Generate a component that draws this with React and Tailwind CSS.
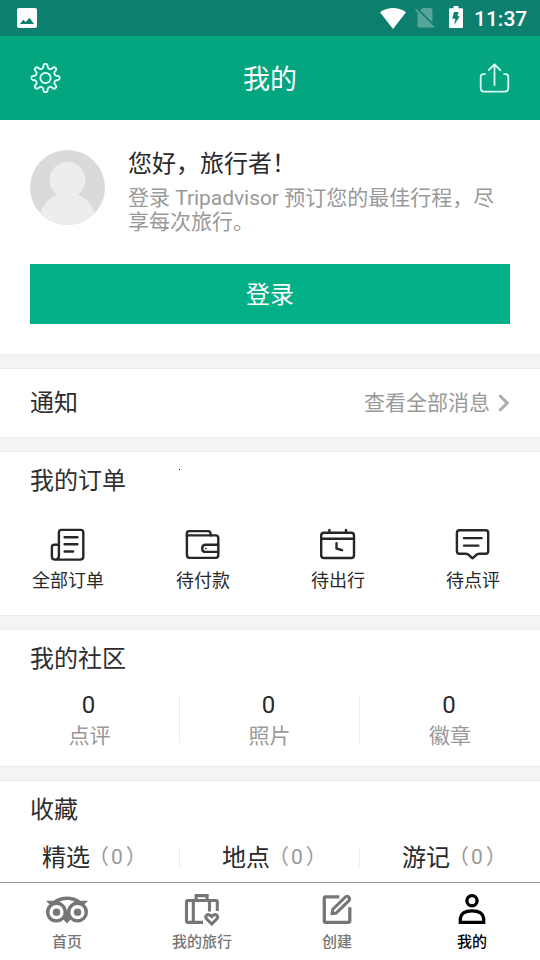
import React from 'react';
import { SiTripadvisor } from 'react-icons/si';

// outline of the eight-toothed settings wheel, centred on 0,0
const gearPath = () => {
    const p = (deg, r) => {
        const a = (deg * Math.PI) / 180;
        return `${(r * Math.cos(a)).toFixed(2)} ${(r * Math.sin(a)).toFixed(2)}`;
    };
    let d = `M${p(-12, 10.8)}`;
    for (let i = 0; i < 8; i++) {
        const c = i * 45;
        d += ` L${p(c - 9.5, 12.6)} Q${p(c - 8, 14.2)} ${p(c, 14.2)} Q${p(c + 8, 14.2)} ${p(c + 9.5, 12.6)} L${p(c + 12, 10.8)}`;
        d += ` Q${p(c + 22.5, 8.9)} ${p(c + 33, 10.8)}`;
    }
    return d + 'Z';
};

const StatusBar = () => (
    <div className="h-9 bg-[#0d7f6e] flex items-center justify-between pl-[17px] pr-3">
        <svg className="w-5 h-5" viewBox="0 0 20 20">
            <rect width="20" height="20" rx="2" fill="#fff" />
            <path d="M3 16 L6.3 11.8 L8.8 14 L12.5 9.8 L17 16Z" fill="#0d7f6e" />
        </svg>
        <div className="flex items-center">
            <svg className="w-[26px] h-[21px]" viewBox="0 0 26 21">
                <path d="M0 4.2 Q13 -4.2 26 4.2 L13 21Z" fill="#fff" />
            </svg>
            <svg className="w-5 h-5 ml-[9px]" viewBox="0 0 20 20">
                <path d="M7.5 0 H15.5 Q17.5 0 17.5 2 V19.5 H4 Q2.5 19.5 2.5 18 V5Z" fill="#57a598" />
                <path d="M1.2 -.2 L20 18.4" stroke="#0d7f6e" strokeWidth="2" />
                <path d="M.6 1.4 L18.8 19.4" stroke="#57a598" strokeWidth="1.7" />
            </svg>
            <svg className="w-[14px] h-[22px] ml-[14px] -mt-0.5" viewBox="0 0 14 22">
                <path d="M4.5 0 H9.5 V2.2 H13 Q14 2.2 14 3.2 V21 Q14 22 13 22 H1 Q0 22 0 21 V3.2 Q0 2.2 1 2.2 H4.5Z" fill="#fff" />
                <path d="M5 6 H9.6 L8.4 10.3 H10.8 L5.2 19 L6.3 12.8 H3.2Z" fill="#0d7f6e" />
            </svg>
            <span className="ml-[11px] mt-0.5 font-['Roboto'] font-medium text-[21px] leading-6 text-white w-[54px] whitespace-nowrap">11:37</span>
        </div>
    </div>
);

const Header = () => (
    <div className="h-[84px] bg-[#04a680] flex items-center justify-between px-[30px]">
        <svg className="w-[31px] h-[30px]" viewBox="-15.5 -15 31 30" fill="none" stroke="#e4fffa" strokeWidth="1.8" strokeLinejoin="round">
            <path d={gearPath()} />
            <circle r="5.2" />
        </svg>
        <div className="text-[27px] leading-8 text-white -mt-px">我的</div>
        <svg className="w-[31px] h-[30px]" viewBox="0 .5 31 30" fill="none" stroke="#dcfff5" strokeWidth="1.8" strokeLinecap="round" strokeLinejoin="round">
            <path d="M15.5 22.5 V2 M9.7 7.7 L15.5 1.8 L21.3 7.7" />
            <path d="M6 11.6 H4.5 Q1.7 11.6 1.7 14.4 V25.5 Q1.7 29.1 5.3 29.1 H25.7 Q29.3 29.1 29.3 25.5 V14.4 Q29.3 11.6 26.5 11.6 H25" />
        </svg>
    </div>
);

const Profile = () => (
    <div className="h-[234px] px-[30px] pt-[30px]">
        <div className="flex h-[114px]">
            <svg className="w-[75px] h-[75px] shrink-0" viewBox="0 0 75 75">
                <defs>
                    <clipPath id="face"><circle cx="37.5" cy="37.5" r="37.5" /></clipPath>
                </defs>
                <g clipPath="url(#face)">
                    <rect width="75" height="75" fill="#dadada" />
                    <circle cx="37.5" cy="30" r="18" fill="#ededed" />
                    <ellipse cx="37.5" cy="72" rx="28.5" ry="29.5" fill="#ededed" />
                </g>
            </svg>
            <div className="ml-[23px] -mt-[3px]">
                <div className="text-2xl leading-[30px] text-[#2a2a2a]">您好，旅行者！</div>
                <div className="mt-[9px] text-[21px] leading-6 text-[#999] w-[375px] font-['Roboto','Noto_Sans_CJK_SC',sans-serif]">
                    登录 <span className="tracking-[-0.05px]">Tripadvisor</span> 预订您的最佳行程，尽<br />享每次旅行。
                </div>
            </div>
        </div>
        <button className="w-full h-[60px] bg-[#02b088] text-white text-2xl leading-[58px] pb-0.5 block">登录</button>
    </div>
);

const Gap = () => <div className="h-[15px] shrink-0 bg-[#f4f4f4] border-y border-[#ebebeb]" />;

const Notice = () => (
    <div className="h-[68px] px-[30px] flex items-center justify-between pb-1">
        <div className="text-2xl leading-8 text-[#2e2e2e]">通知</div>
        <div className="flex items-center">
            <span className="text-[21px] leading-8 text-[#999]">查看全部消息</span>
            <svg className="w-3 h-5 ml-2 mt-1" viewBox="0 0 12 20" fill="none" stroke="#adadad" strokeWidth="3">
                <path d="M1.4 2.2 L9.2 10 L1.4 17.8" />
            </svg>
        </div>
    </div>
);

const orders = [
    {
        label: '全部订单',
        icon: (
            <>
                <path d="M11.3 18.8 H6.5 Q4.3 18.8 4.3 21 V30.5 Q4.3 33.6 7.5 33.6 H32.5 Q35.7 33.6 35.7 30.5 V6.5 Q35.7 3.9 33 3.9 H14 Q11.3 3.9 11.3 6.5 V30 Q11.3 33.6 7.8 33.6" />
                <path d="M17 11.3 H29.8 M17 18.3 H29.8 M17 25.5 H25.5" />
            </>
        ),
    },
    {
        label: '待付款',
        icon: (
            <>
                <path d="M4.3 10.5 V7 Q4.3 5.1 6.5 5.1 H25.5 Q28 5.1 28.2 9.4" />
                <path d="M4.3 9.4 H33 Q35.7 9.4 35.7 12 V29 Q35.7 31.9 33 31.9 H7 Q4.3 31.9 4.3 29Z" />
                <path d="M35.5 18.8 H23 Q19.6 18.8 19.6 22.4 Q19.6 25.9 23 25.9 H35.5" />
                <circle cx="23.2" cy="22.4" r=".4" strokeWidth="1" />
            </>
        ),
    },
    {
        label: '待出行',
        icon: (
            <>
                <rect x="3.6" y="6.8" width="32.8" height="25.2" rx="2.8" />
                <path d="M3.6 12.8 H36.4 M11.8 4 V6.8 M28.4 4 V6.8" />
                <path d="M18.9 17.3 V22.5 L24.4 24.2" />
            </>
        ),
    },
    {
        label: '待点评',
        icon: (
            <>
                <path d="M6.8 4.3 H33 Q35.6 4.3 35.6 7 V25 Q35.6 27.7 33 27.7 H26.5 Q24 27.7 22.5 30 L19.9 32.3 L17.3 30 Q15.8 27.7 13.3 27.7 H6.8 Q4.3 27.7 4.3 25 V7 Q4.3 4.3 6.8 4.3Z" />
                <path d="M11.4 12.1 H29 M11.4 19.6 H25.8" />
            </>
        ),
    },
];

const Orders = () => (
    <div className="h-[163px] pt-[11px] relative">
        <div className="px-[30px] text-2xl leading-8 text-[#2e2e2e]">我的订单</div>
        <div className="absolute left-[179px] top-[17px] w-px h-px bg-black" />
        <div className="grid grid-cols-4 mt-[31px]">
            {orders.map((o) => (
                <div key={o.label} className="flex flex-col items-center">
                    <svg className="w-10 h-9 mr-px" viewBox="-.6 0 40 36" fill="none" stroke="#252729" strokeWidth="2.4" strokeLinecap="round" strokeLinejoin="round">
                        {o.icon}
                    </svg>
                    <div className="mt-[5px] ml-px text-lg leading-6 text-[#2a2a2a]">{o.label}</div>
                </div>
            ))}
        </div>
    </div>
);

const Community = () => (
    <div className="h-[136px] pt-[11px]">
        <div className="px-[30px] text-2xl leading-8 text-[#2e2e2e]">我的社区</div>
        <div className="grid grid-cols-3 mt-[23px] divide-x divide-[#ececec]">
            {['点评', '照片', '徽章'].map((name) => (
                <div key={name} className="flex flex-col items-center h-[47px] pr-0.5">
                    <div className="font-['Roboto'] text-2xl leading-6 text-[#2a2a2a] -mt-[3px]">0</div>
                    <div className="text-[21px] leading-6 text-[#999] mt-[5px] ml-0.5">{name}</div>
                </div>
            ))}
        </div>
    </div>
);

const Favorites = () => (
    <div className="h-[101px] pt-[11px]">
        <div className="px-[30px] text-2xl leading-8 text-[#2e2e2e]">收藏</div>
        <div className="grid grid-cols-3 mt-6 divide-x divide-[#ececec]">
            {['精选', '地点', '游记'].map((name) => (
                <div key={name} className="flex items-start h-[19px] pl-[42px]">
                    <span className="text-2xl leading-5 text-[#2a2a2a] -mt-0.5">{name}</span>
                    <span className="text-[21px] leading-5 text-[#999] whitespace-nowrap -mt-px font-['Roboto','Noto_Sans_CJK_SC',sans-serif]">
                        <span className="-ml-0.5 mr-0.5">（</span>0<span className="ml-[3px]">）</span>
                    </span>
                </div>
            ))}
        </div>
    </div>
);

const tabs = [
    { label: '首页', icon: null },
    {
        label: '我的旅行',
        icon: (
            <g fill="none" stroke="currentColor" strokeWidth="3.1">
                <path d="M24.5 32.4 H9.5 Q8 32.4 8 30.9 V12 Q8 10.5 9.5 10.5 H37.3 Q38.8 10.5 38.8 12 V21" />
                <path d="M17.6 10 V5.6 H28.6 V10 M14.8 10.4 V32.6 M31 10.4 V21.5" />
                <path d="M33.2 34 L28 28.8 Q26.2 26 28.7 24.8 Q31 23.9 33.2 26.5 Q35.4 23.9 37.7 24.8 Q40.2 26 38.4 28.8Z" />
            </g>
        ),
    },
    {
        label: '创建',
        icon: (
            <g fill="none" stroke="currentColor" strokeWidth="3.3">
                <path d="M25.8 6.9 H12.1 Q10.8 6.9 10.8 8.2 V31 Q10.8 32.4 12.1 32.4 H34.9 Q36.3 32.4 36.3 31 V17.3" />
                <path d="M18.4 23.7 L19.3 19.3 L32 6.9 Q33.8 5.7 35.4 7.1 Q36.8 8.8 35.5 10.6 L22.9 22.9Z" strokeWidth="3" strokeLinejoin="round" />
            </g>
        ),
    },
    {
        label: '我的',
        active: true,
        icon: (
            <g fill="none" stroke="currentColor" strokeWidth="3.3">
                <circle cx="23.5" cy="10.7" r="5.1" />
                <path d="M11.8 32.4 V28.5 Q12.7 20.9 23.5 20.9 Q34.3 20.9 35.2 28.5 V32.4Z" />
            </g>
        ),
    },
];

const TabBar = () => (
    <div className="h-[78px] border-t border-[#999] grid grid-cols-4 pt-[7px]">
        {tabs.map((t) => (
            <div key={t.label} className={`flex flex-col items-center pr-px ${t.active ? 'text-black' : 'text-[#767676]'}`}>
                <div className="h-9 flex items-center">
                    {t.icon ? (
                        <svg className="w-12 h-9" viewBox="-.5 0 48 36">{t.icon}</svg>
                    ) : (
                        <SiTripadvisor className="w-[42px] h-[42px] mt-[3px]" />
                    )}
                </div>
                <div className="mt-[5px] text-[15px] leading-5 font-medium">{t.label}</div>
            </div>
        ))}
    </div>
);

const App = () => (
    <div className="w-[540px] h-[960px] overflow-hidden bg-white font-['Noto_Sans_CJK_SC',sans-serif]">
        <StatusBar />
        <Header />
        <Profile />
        <Gap />
        <Notice />
        <Gap />
        <Orders />
        <Gap />
        <Community />
        <Gap />
        <Favorites />
        <TabBar />
    </div>
);

export default App;
